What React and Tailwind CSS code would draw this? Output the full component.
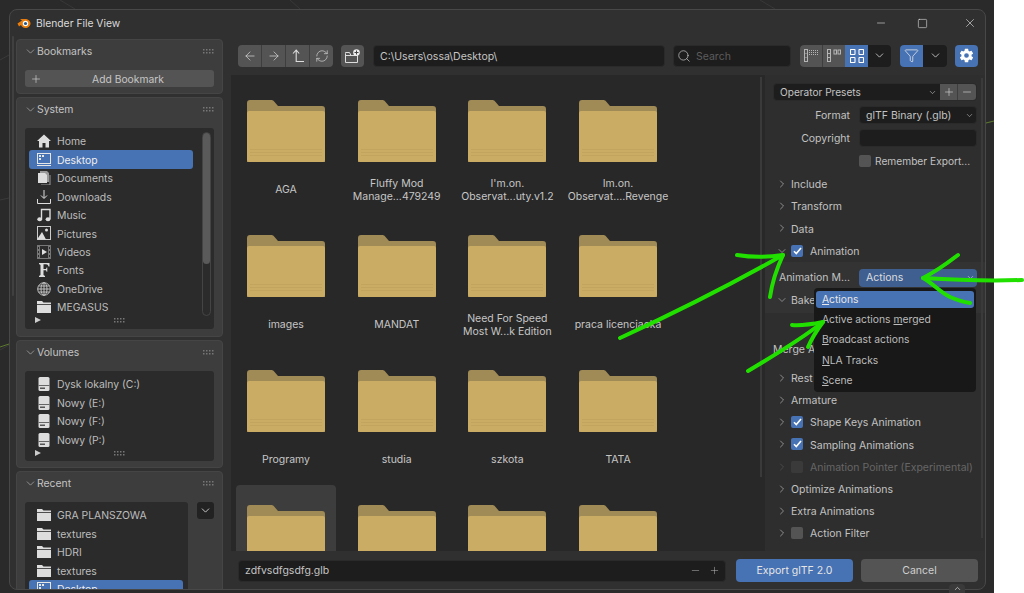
import React from 'react';
import { ArrowLeft, ArrowRight, ChevronDown, ChevronRight, ChevronUp, Funnel, Minus, Plus, RefreshCw, Search, Square, X } from 'lucide-react';
import { IoSettingsSharp } from 'react-icons/io5';

const Grip = () => (
  <svg width="11" height="5" viewBox="0 0 11 5" className="shrink-0">
    {[0, 3, 6, 9].map((x) => (
      <g key={x} fill="#777">
        <rect x={x} y="0" width="1.5" height="1.5" />
        <rect x={x} y="3" width="1.5" height="1.5" />
      </g>
    ))}
  </svg>
);

const FolderSmall = () => (
  <svg width="14" height="12" viewBox="0 0 14 12">
    <path d="M0 0h5l1.5 1.5H14v1.5H0z" fill="#ddd" />
    <path d="M0 3.8h14V12H0z" fill="#ddd" />
  </svg>
);

const DriveIcon = () => (
  <svg width="12" height="14" viewBox="0 0 12 14">
    <rect x="0.5" y="0" width="11" height="14" rx="1.5" fill="#ddd" />
    <rect x="0.5" y="8" width="11" height="1" fill="#666" />
    <rect x="2" y="10.5" width="5" height="1.5" fill="#555" />
  </svg>
);

const sysIcons = {
  home: (
    <svg width="14" height="14" viewBox="0 0 14 14"><path d="M7 0.5 14 7h-2v6.5H8.5V9h-3v4.5H2V7H0z" fill="#ddd" /></svg>
  ),
  desktop: (
    <svg width="14" height="13" viewBox="0 0 14 13" fill="none"><rect x="0.5" y="0.5" width="13" height="10" stroke="#e6e6e6" /><path d="M2 2h2v2H2zM5 2h2v2H5zM2 5h2v2H2z" fill="#e6e6e6" /><path d="M0 12.5h14" stroke="#e6e6e6" /></svg>
  ),
  docs: (
    <svg width="14" height="14" viewBox="0 0 14 14"><path d="M3 0h7l2 2v9H3z" fill="#999" /><path d="M1 2h7l2 2v8H1z" fill="#ddd" /><path d="M13 4v10H4" stroke="#999" fill="none" /></svg>
  ),
  downloads: (
    <svg width="14" height="14" viewBox="0 0 14 14" fill="none" stroke="#ddd"><path d="M7 0v8M4 5.5 7 8.5l3-3M0.5 9v4.5h13V9" /></svg>
  ),
  music: (
    <svg width="14" height="14" viewBox="0 0 14 14"><path d="M4.5 11V1.5H13V11" stroke="#ddd" strokeWidth="1.4" fill="none" /><ellipse cx="2.7" cy="11.3" rx="2.4" ry="2" fill="#ddd" /><ellipse cx="11" cy="11.3" rx="2.4" ry="2" fill="#ddd" /></svg>
  ),
  pictures: (
    <svg width="14" height="14" viewBox="0 0 14 14" fill="none"><rect x="0.5" y="0.5" width="13" height="13" stroke="#ccc" /><path d="M0 13.5 5 6l4 7.5z" fill="#ddd" /><circle cx="9.5" cy="4" r="1.5" fill="#ddd" /></svg>
  ),
  videos: (
    <svg width="14" height="14" viewBox="0 0 14 14"><path d="M0 0h14v14H0z" fill="#777" /><path d="M3 1h8v12H3z" fill="#2b2b2b" /><path d="M5 4l5 3-5 3z" fill="#ddd" /><path d="M1 2h1v2H1zM1 6h1v2H1zM1 10h1v2H1zM12 2h1v2h-1zM12 6h1v2h-1zM12 10h1v2h-1z" fill="#2b2b2b" /></svg>
  ),
  fonts: (
    <svg width="12" height="14" viewBox="0 0 12 14"><path d="M1 0h10.5v3.5h-1C10 2 9.5 1.200 8 1.200H5.500v4.800H8l.6-1.500h.7v4.200h-.7L8 7.200H5.500V12L7 13v1H1v-1l1.500-1V2L1 1z" fill="#ddd" /></svg>
  ),
  globe: (
    <svg width="14" height="14" viewBox="0 0 14 14" fill="none" stroke="#ccc" strokeWidth="0.9"><circle cx="7" cy="7" r="6.300" /><ellipse cx="7" cy="7" rx="3" ry="6.300" /><path d="M7 .7v12.600M.7 7h12.600M1.500 4h11M1.500 10h11" /></svg>
  ),
  folder: <FolderSmall />,
};

const FolderBig = () => (
  <svg width="78" height="62" viewBox="0 0 78 62" className="block shrink-0">
    <path d="M0 62V3a3 3 0 0 1 3-3h21.500a3 3 0 0 1 2 .8L31 6h44a3 3 0 0 1 3 3v53z" fill="#a08a55" />
    <path d="M0 13a2 2 0 0 1 2-2h74a2 2 0 0 1 2 2v47a2 2 0 0 1-2 2H2a2 2 0 0 1-2-2z" fill="#cbac64" />
    <path d="M3 49.500h72M3 52.500h72M3 55.500h72" stroke="#bfa25e" strokeWidth="0.8" />
  </svg>
);

const Panel = ({ title, className, children }) => (
  <div className={`rounded bg-[#3d3d3d] border border-[#454545] px-[8px] shrink-0 ${className}`}>
    <div className="flex items-center h-[22px] text-[10.400px] text-[#c4c4c4]">
      <ChevronDown size={13} strokeWidth={1.3} className="-ml-[1px] text-[#b0b0b0]" />
      <span className="flex-1 pt-[2px]">{title}</span>
      <Grip />
    </div>
    {children}
  </div>
);

const SideRow = ({ icon, label, active }) => (
  <div className={`flex items-center h-[18.45px] ml-[4px] pl-[6px] rounded-[3px] text-[10.400px] ${active ? 'bg-[#4772b3] text-[#eeeeee]' : 'text-[#bdbdbd]'}`}>
    <span className="w-[21px] flex justify-center shrink-0 -ml-[2px] mr-[3px]">{icon}</span>
    <span className="whitespace-nowrap pt-[2px]">{label}</span>
  </div>
);

const system = [
  ['home', 'Home'],
  ['desktop', 'Desktop', true],
  ['docs', 'Documents'],
  ['downloads', 'Downloads'],
  ['music', 'Music'],
  ['pictures', 'Pictures'],
  ['videos', 'Videos'],
  ['fonts', 'Fonts'],
  ['globe', 'OneDrive'],
  ['folder', 'MEGASUS'],
];

const files = [
  ['AGA'],
  ['Fluffy Mod', 'Manage...479249'],
  ["I'm.on.", 'Observat...uty.v1.2'],
  ['Im.on.', 'Observat....Revenge'],
  ['images'],
  ['MANDAT'],
  ['Need For Speed', 'Most W...k Edition'],
  ['praca licencjacka'],
  ['Programy'],
  ['studia'],
  ['szkota'],
  ['TATA'],
  [],
  [],
  [],
  [],
];

const ListFooter = () => (
  <div className="relative flex items-center justify-center h-[13px] -mt-[2px]">
    <span className="absolute left-[10px] top-[3px] w-0 h-0 border-y-[3px] border-y-transparent border-l-[6px] border-l-[#cccccc]" />
    <Grip />
  </div>
);

const Tile = ({ lines, selected }) => (
  <div className={`w-[100px] h-[125px] rounded-t-[4px] pt-[20px] flex flex-col items-center ${selected ? 'bg-[#3d3d3d]' : ''}`}>
    <FolderBig />
    <div className="h-[55px] -mb-[12px] shrink-0 flex flex-col justify-center text-[10.500px] leading-[13px] text-center text-[#c6c6c6] whitespace-nowrap">
      {lines.map((l) => (
        <div key={l}>{l}</div>
      ))}
    </div>
  </div>
);

const Tree = ({ label, open, check, disabled }) => (
  <div className={`flex items-center h-[22.2px] pl-[11px] text-[10.500px] ${disabled ? 'text-[#666666]' : 'text-[#c2c2c2]'}`}>
    {open ? (
      <ChevronDown size={12} strokeWidth={1.4} className="text-[#aaaaaa] mr-[3px]" />
    ) : (
      <ChevronRight size={12} strokeWidth={1.4} className={`mr-[3px] ${disabled ? 'text-[#555555]' : 'text-[#b4b4b4]'}`} />
    )}
    {check === 'on' && (
      <span className="w-[12px] h-[12px] mr-[7px] rounded-[2px] bg-[#4772b3] flex items-center justify-center">
        <svg width="9" height="8" viewBox="0 0 9 8" fill="none" stroke="#fff" strokeWidth="1.6"><path d="M1 4.200 3.300 6.500 8 1" /></svg>
      </span>
    )}
    {check === 'off' && <span className={`w-[12px] h-[12px] mr-[7px] rounded-[2px] ${disabled ? 'bg-[#3a3a3a]' : 'bg-[#545454]'}`} />}
    <span className="whitespace-nowrap pt-[2px]">{label}</span>
  </div>
);

const ToolBtn = ({ children, className = '' }) => (
  <div className={`h-full flex items-center justify-center ${className}`}>{children}</div>
);

const MenuItem = ({ first, rest, active, pre }) => (
  <div className={`flex items-center px-[6px] rounded-[3px] text-[10.300px] whitespace-pre ${active ? 'bg-[#4772b3] text-[#e8e8e8] h-[17px] mb-[1.500px]' : 'text-[#bcbcbc] h-[20.300px]'}`}>
    {pre}
    <span className="underline underline-offset-1">{first}</span>
    {rest}
  </div>
);

export default function App() {
  return (
    <div className="relative w-[1024px] h-[593px] overflow-hidden bg-white font-['Inter',sans-serif] flex">
      <div className="relative w-[994px] h-[593px] bg-[#2a2a2a] pl-[9px] pt-[9px] shrink-0">
        <svg className="absolute inset-0" width="994" height="593" fill="none">
          <path d="M0 60 9 55M0 200 9 198M0 350 9 345M986 123 994 121" stroke="#3a3a3a" />
          <path d="M0 347 9 344M986 123 994 121" stroke="#5c7a2c" />
          <path d="M60 0 75 9M290 0 300 9M760 0 775 9" stroke="#383838" />
        </svg>

        <div className="relative w-[977px] h-[581px] rounded-[8px] bg-[#303030] border border-[#484848] overflow-hidden flex flex-col">
          <div className="flex items-center h-[26px] pl-[7px] shrink-0">
            <svg width="14" height="12" viewBox="0 0 14 12" className="mr-[5px]">
              <path d="M0.500 6.500 5 3.500 3 2h5c3 0 5.500 1.800 5.500 4.500S11 11 8.500 11 4.500 9.500 4 8l-2 1.500z" fill="#e87d0d" />
              <circle cx="8.500" cy="6.500" r="2.700" fill="#fff" />
              <circle cx="8.500" cy="6.500" r="1.600" fill="#265787" />
            </svg>
            <span className="text-[10.300px] text-[#dadada] flex-1 pt-[2px]">Blender File View</span>
            <Minus size={12} strokeWidth={1.2} className="text-[#e0e0e0] mr-[30px]" />
            <Square size={11} strokeWidth={1.3} className="text-[#e0e0e0] mr-[35px]" />
            <X size={14} strokeWidth={1.1} className="text-[#e0e0e0] mr-[8px]" />
          </div>

          <div className="flex flex-1 min-h-0">
            <div className="w-[221px] h-[554px] shrink-0 flex overflow-hidden">
              <div className="w-[2px] ml-[2px] mr-[2px] h-[260px] bg-[#404040] rounded shrink-0" />
              <div className="flex flex-col gap-[3px] pt-[3px] w-[207px] shrink-0">
                <Panel title="Bookmarks" className="h-[55px]">
                  <div className="relative h-[17px] mt-[8px] pl-[17px] rounded-[3px] bg-[#545454] flex items-center justify-center text-[10.300px] text-[#c6c6c6]">
                    <Plus size={12} strokeWidth={1.2} className="absolute left-[5px] text-[#dddddd]" />
                    <span className="pt-[2px]">Add Bookmark</span>
                  </div>
                </Panel>
                <Panel title="System" className="h-[240px]">
                  <div className="relative mt-[8px] h-[201px] rounded-[3px] bg-[#2b2b2b] pt-[4px]">
                    <div className="w-[168px]">
                      {system.map(([k, l, a]) => (
                        <SideRow key={l} icon={sysIcons[k]} label={l} active={a} />
                      ))}
                    </div>
                    <div className="absolute right-[3px] top-[4px] w-[9px] h-[184px] rounded-full border border-[#444444]">
                      <div className="w-full h-[131px] rounded-full bg-[#5a5a5a]" />
                    </div>
                    <ListFooter />
                  </div>
                </Panel>
                <Panel title="Volumes" className="h-[128px]">
                  <div className="mt-[8px] h-[90px] rounded-[3px] bg-[#2b2b2b] pt-[4px]">
                    {['Dysk lokalny (C:)', 'Nowy (E:)', 'Nowy (F:)', 'Nowy (P:)'].map((l) => (
                      <SideRow key={l} icon={<DriveIcon />} label={l} />
                    ))}
                    <ListFooter />
                  </div>
                </Panel>
                <Panel title="Recent" className="h-[130px]">
                  <div className="flex mt-[8px] gap-[9px]">
                    <div className="w-[164px] h-[100px] rounded-[3px] bg-[#2b2b2b] pt-[4px] pr-[5px] overflow-hidden">
                      {['GRA PLANSZOWA', 'textures', 'HDRI', 'textures'].map((l, i) => (
                        <SideRow key={i} icon={<FolderSmall />} label={l} />
                      ))}
                      <SideRow icon={sysIcons.desktop} label="Desktop" active />
                    </div>
                    <div className="w-[17px] h-[17px] rounded-[3px] bg-[#222222] flex items-center justify-center">
                      <ChevronDown size={13} strokeWidth={1.6} className="text-[#dddddd]" />
                    </div>
                  </div>
                </Panel>
              </div>
            </div>

            <div className="flex-1 min-w-0 flex flex-col">
              <div className="h-[39px] shrink-0 flex items-center pl-[7px]">
                <div className="flex h-[22px] w-[95px] rounded-[4px] overflow-hidden bg-[#545454] divide-x divide-[#3e3e3e]">
                  <ToolBtn className="w-[24px]"><ArrowLeft size={14} strokeWidth={1.200} className="text-[#dddddd]" /></ToolBtn>
                  <ToolBtn className="w-[24px]"><ArrowRight size={14} strokeWidth={1.200} className="text-[#dddddd]" /></ToolBtn>
                  <ToolBtn className="w-[24px]">
                    <svg width="12" height="14" viewBox="0 0 12 14" fill="none" stroke="#dddddd" strokeWidth="1.100"><path d="M1 4.500 4.200 1l3 3.500M4.200 1v11.500H12" /></svg>
                  </ToolBtn>
                  <ToolBtn className="w-[23px]"><RefreshCw size={14} strokeWidth={1.100} className="text-[#dddddd]" /></ToolBtn>
                </div>
                <div className="ml-[8px] w-[23px] h-[22px] rounded-[4px] bg-[#545454] flex items-center justify-center">
                  <svg width="15" height="14" viewBox="0 0 15 14" fill="none">
                    <path d="M0.500 4.500v9h12v-7h-6.500L4.500 3.500h-4z" stroke="#dddddd" />
                    <path d="M0.500 6.500h12" stroke="#dddddd" />
                    <circle cx="11.500" cy="3.500" r="3.300" fill="#eeeeee" />
                    <path d="M11.500 1.500v4M9.500 3.500h4" stroke="#444444" />
                  </svg>
                </div>
                <div className="ml-[9px] w-[292px] h-[22px] rounded-[4px] bg-[#1d1d1d] border border-[#2a2a2a] flex items-center pl-[6px] text-[10.500px] text-[#c6c6c6]"><span className="pt-[2px]">C:\Users\ossa\Desktop\</span></div>
                <div className="ml-[8px] w-[118px] h-[22px] rounded-[4px] bg-[#1d1d1d] border border-[#2a2a2a] flex items-center pl-[3px] text-[10.500px] text-[#5c5c5c]">
                  <Search size={14} strokeWidth={1.300} className="text-[#c0c0c0] mr-[5px]" />
                  <span className="pt-[2px]">Search</span>
                </div>
                <div className="ml-[9px] flex h-[22px] w-[91px] rounded-[4px] overflow-hidden bg-[#1d1d1d]">
                  <ToolBtn className="w-[23px] bg-[#545454] border-r border-[#3e3e3e]">
                    <svg width="14" height="13" viewBox="0 0 14 13" fill="none" stroke="#b5b5b5"><rect x="0.500" y="0.500" width="3" height="12" /><path d="M0.500 4.500h3M0.500 8.500h3M5 1.500h9M5 3.500h9M5 5.500h9" strokeDasharray="1 1" /></svg>
                  </ToolBtn>
                  <ToolBtn className="w-[22px] bg-[#545454]">
                    <svg width="14" height="13" viewBox="0 0 14 13" fill="none" stroke="#b5b5b5"><rect x="0.500" y="0.500" width="3" height="12" /><path d="M0.500 4.500h3M0.500 8.500h3" /><rect x="7" y="1" width="2.500" height="4" /><rect x="11" y="1" width="2.500" height="4" /></svg>
                  </ToolBtn>
                  <ToolBtn className="w-[23px] bg-[#4772b3]">
                    <svg width="14" height="14" viewBox="0 0 14 14" fill="none" stroke="#ffffff" strokeWidth="1.100"><rect x="0.500" y="0.500" width="4.500" height="5" rx="0.500" /><rect x="9" y="0.500" width="4.500" height="5" rx="0.500" /><rect x="0.500" y="8.500" width="4.500" height="5" rx="0.500" /><rect x="9" y="8.500" width="4.500" height="5" rx="0.500" /></svg>
                  </ToolBtn>
                  <div className="flex-1 flex items-center justify-center"><ChevronDown size={13} strokeWidth={1.500} className="text-[#d8d8d8]" /></div>
                </div>
                <div className="ml-[9px] flex h-[22px] w-[47px] rounded-[4px] overflow-hidden bg-[#1d1d1d]">
                  <div className="w-[23px] bg-[#4772b3] flex items-center justify-center"><Funnel size={15} strokeWidth={1.200} className="text-[#eeeeee]" /></div>
                  <div className="flex-1 flex items-center justify-center"><ChevronDown size={13} strokeWidth={1.500} className="text-[#d8d8d8]" /></div>
                </div>
                <div className="ml-[8px] w-[23px] h-[22px] rounded-[4px] bg-[#4772b3] flex items-center justify-center">
                  <IoSettingsSharp size={15} className="text-white" />
                </div>
              </div>

              <div className="flex h-[476px] shrink-0">
                <div className="relative w-[534px] h-full bg-[#282828] overflow-hidden shrink-0">
                  <div className="grid grid-cols-[repeat(4,100px)] gap-x-[10.700px] gap-y-[10px] pl-[5px] pt-[5px]">
                    {files.map((lines, i) => (
                      <Tile key={i} lines={lines} selected={i === 12} />
                    ))}
                  </div>
                  <div className="absolute right-[3px] top-[2px] w-[2px] h-[400px] bg-[#3a3a3a]" />
                </div>

                <div className="relative flex-1 min-w-0 bg-[#2e2e2e] pt-[8px]">
                  <div className="flex ml-[8px] w-[204px] h-[18px] rounded-[4px] bg-[#1d1d1d] border border-[#2a2a2a] overflow-hidden items-center text-[10.100px] text-[#c4c4c4]">
                    <span className="flex-1 pl-[6px] pt-[2px]">Operator Presets</span>
                    <ChevronDown size={9} strokeWidth={1.500} className="mr-[3px] text-[#cccccc]" />
                    <div className="w-[18px] h-full bg-[#545454] flex items-center justify-center border-r border-[#3e3e3e]"><Plus size={12} strokeWidth={1.200} className="text-[#dddddd]" /></div>
                    <div className="w-[18px] h-full bg-[#545454] flex items-center justify-center"><Minus size={12} strokeWidth={1.200} className="text-[#dddddd]" /></div>
                  </div>

                  <div className="flex items-center mt-[5px] h-[18px] text-[10.500px] text-[#c2c2c2]">
                    <span className="w-[85px] text-right pt-[2px]">Format</span>
                    <div className="ml-[9px] w-[118px] h-full rounded-[4px] bg-[#1d1d1d] border border-[#2a2a2a] flex items-center pl-[6px]">
                      <span className="flex-1 pt-[2px]">glTF Binary (.glb)</span>
                      <ChevronDown size={9} strokeWidth={1.500} className="mr-[2px]" />
                    </div>
                  </div>
                  <div className="flex items-center mt-[5px] h-[18px] text-[10.500px] text-[#c2c2c2]">
                    <span className="w-[85px] text-right pt-[2px]">Copyright</span>
                    <div className="ml-[9px] w-[118px] h-full rounded-[4px] bg-[#1d1d1d] border border-[#2a2a2a]" />
                  </div>
                  <div className="flex items-center mt-[5px] h-[18px] pl-[94px] text-[10.200px] text-[#c2c2c2]">
                    <span className="w-[12px] h-[12px] rounded-[2px] bg-[#545454] mr-[4px]" />
                    <span className="whitespace-nowrap pt-[2px]">Remember Export...</span>
                  </div>

                  <div className="mt-[3px]">
                    <Tree label="Include" />
                    <Tree label="Transform" />
                    <Tree label="Data" />
                    <Tree label="Animation" open check="on" />
                  </div>
                  <div className="bg-[#333333] h-[51px] pt-[7px]">
                    <div className="flex items-center h-[18px] mb-[2px] text-[10.500px] text-[#c2c2c2]">
                      <span className="w-[85px] text-right whitespace-nowrap">Animation M...</span>
                      <div className="ml-[9px] w-[118px] h-full rounded-[4px] bg-[#3f5f91] flex items-center pl-[7px] text-[#dddddd]">
                        <span className="flex-1">Actions</span>
                        <ChevronDown size={9} strokeWidth={1.500} className="mr-[2px]" />
                      </div>
                    </div>
                    <Tree label="Bake" open />
                  </div>
                  <div className="h-[54px] flex items-end pb-[9px] pl-[8px] text-[10.500px] text-[#c2c2c2]">Merge A</div>
                  <Tree label="Rest" />
                  <Tree label="Armature" />
                  <Tree label="Shape Keys Animation" check="on" />
                  <Tree label="Sampling Animations" check="on" />
                  <Tree label="Animation Pointer (Experimental)" check="off" disabled />
                  <Tree label="Optimize Animations" />
                  <Tree label="Extra Animations" />
                  <Tree label="Action Filter" check="off" />
                  <div className="absolute right-[2px] top-[3px] w-[2px] h-[460px] bg-[#3a3a3a]" />
                </div>
              </div>

              <div className="h-[39px] shrink-0 flex items-center pl-[7px]">
                <div className="w-[488px] h-[22px] rounded-[4px] bg-[#1d1d1d] border border-[#2a2a2a] flex items-center pl-[6px] pr-[5px] text-[10.500px] text-[#c4c4c4]">
                  <span className="flex-1">zdfvsdfgsdfg.glb</span>
                  <Minus size={11} strokeWidth={1.100} className="text-[#bbbbbb] mr-[8px]" />
                  <Plus size={11} strokeWidth={1.100} className="text-[#bbbbbb]" />
                </div>
                <div className="ml-[10px] w-[117px] h-[23px] rounded-[4px] bg-[#4772b3] flex items-center justify-center text-[10.500px] text-[#e6e6e6]">Export glTF 2.0</div>
                <div className="ml-[8px] w-[117px] h-[23px] rounded-[4px] bg-[#545454] flex items-center justify-center text-[10.500px] text-[#d0d0d0]">Cancel</div>
              </div>
            </div>
          </div>
        </div>
        <div className="absolute left-[949px] top-[584px] w-[16px] h-[9px] rounded-t bg-[#3a3a3a] flex justify-center">
          <ChevronUp size={9} className="text-[#cccccc]" />
        </div>
      </div>

      <div className="absolute left-[814px] top-[288px] w-[162px] h-[104px] rounded-[4px] bg-[#181818] pt-[3px] px-[2px]">
        <MenuItem first="A" rest="ctions" active />
        <MenuItem pre="Active actions " first="m" rest="erged" />
        <MenuItem first="B" rest="roadcast actions" />
        <MenuItem first="N" rest="LA Tracks" />
        <MenuItem first="S" rest="cene" />
      </div>

      <svg className="absolute inset-0 pointer-events-none" width="1024" height="593" fill="none" stroke="#21e000" strokeWidth="4" strokeLinecap="round" strokeLinejoin="round">
        <path d="M620 338C670 315 730 285 783 255" />
        <path d="M737 255C755 258 770 257 783 255C776 270 772 283 770 297" />
        <path d="M1022 280C990 281 955 280 923 278" />
        <path d="M958 255C945 265 935 272 923 278C935 285 940 292 950 297C957 300 963 302 970 303" />
        <path d="M748 371C775 355 800 340 823 322" />
        <path d="M792 325C803 326 813 324 823 322C817 330 812 338 808 347" />
      </svg>
    </div>
  );
}
